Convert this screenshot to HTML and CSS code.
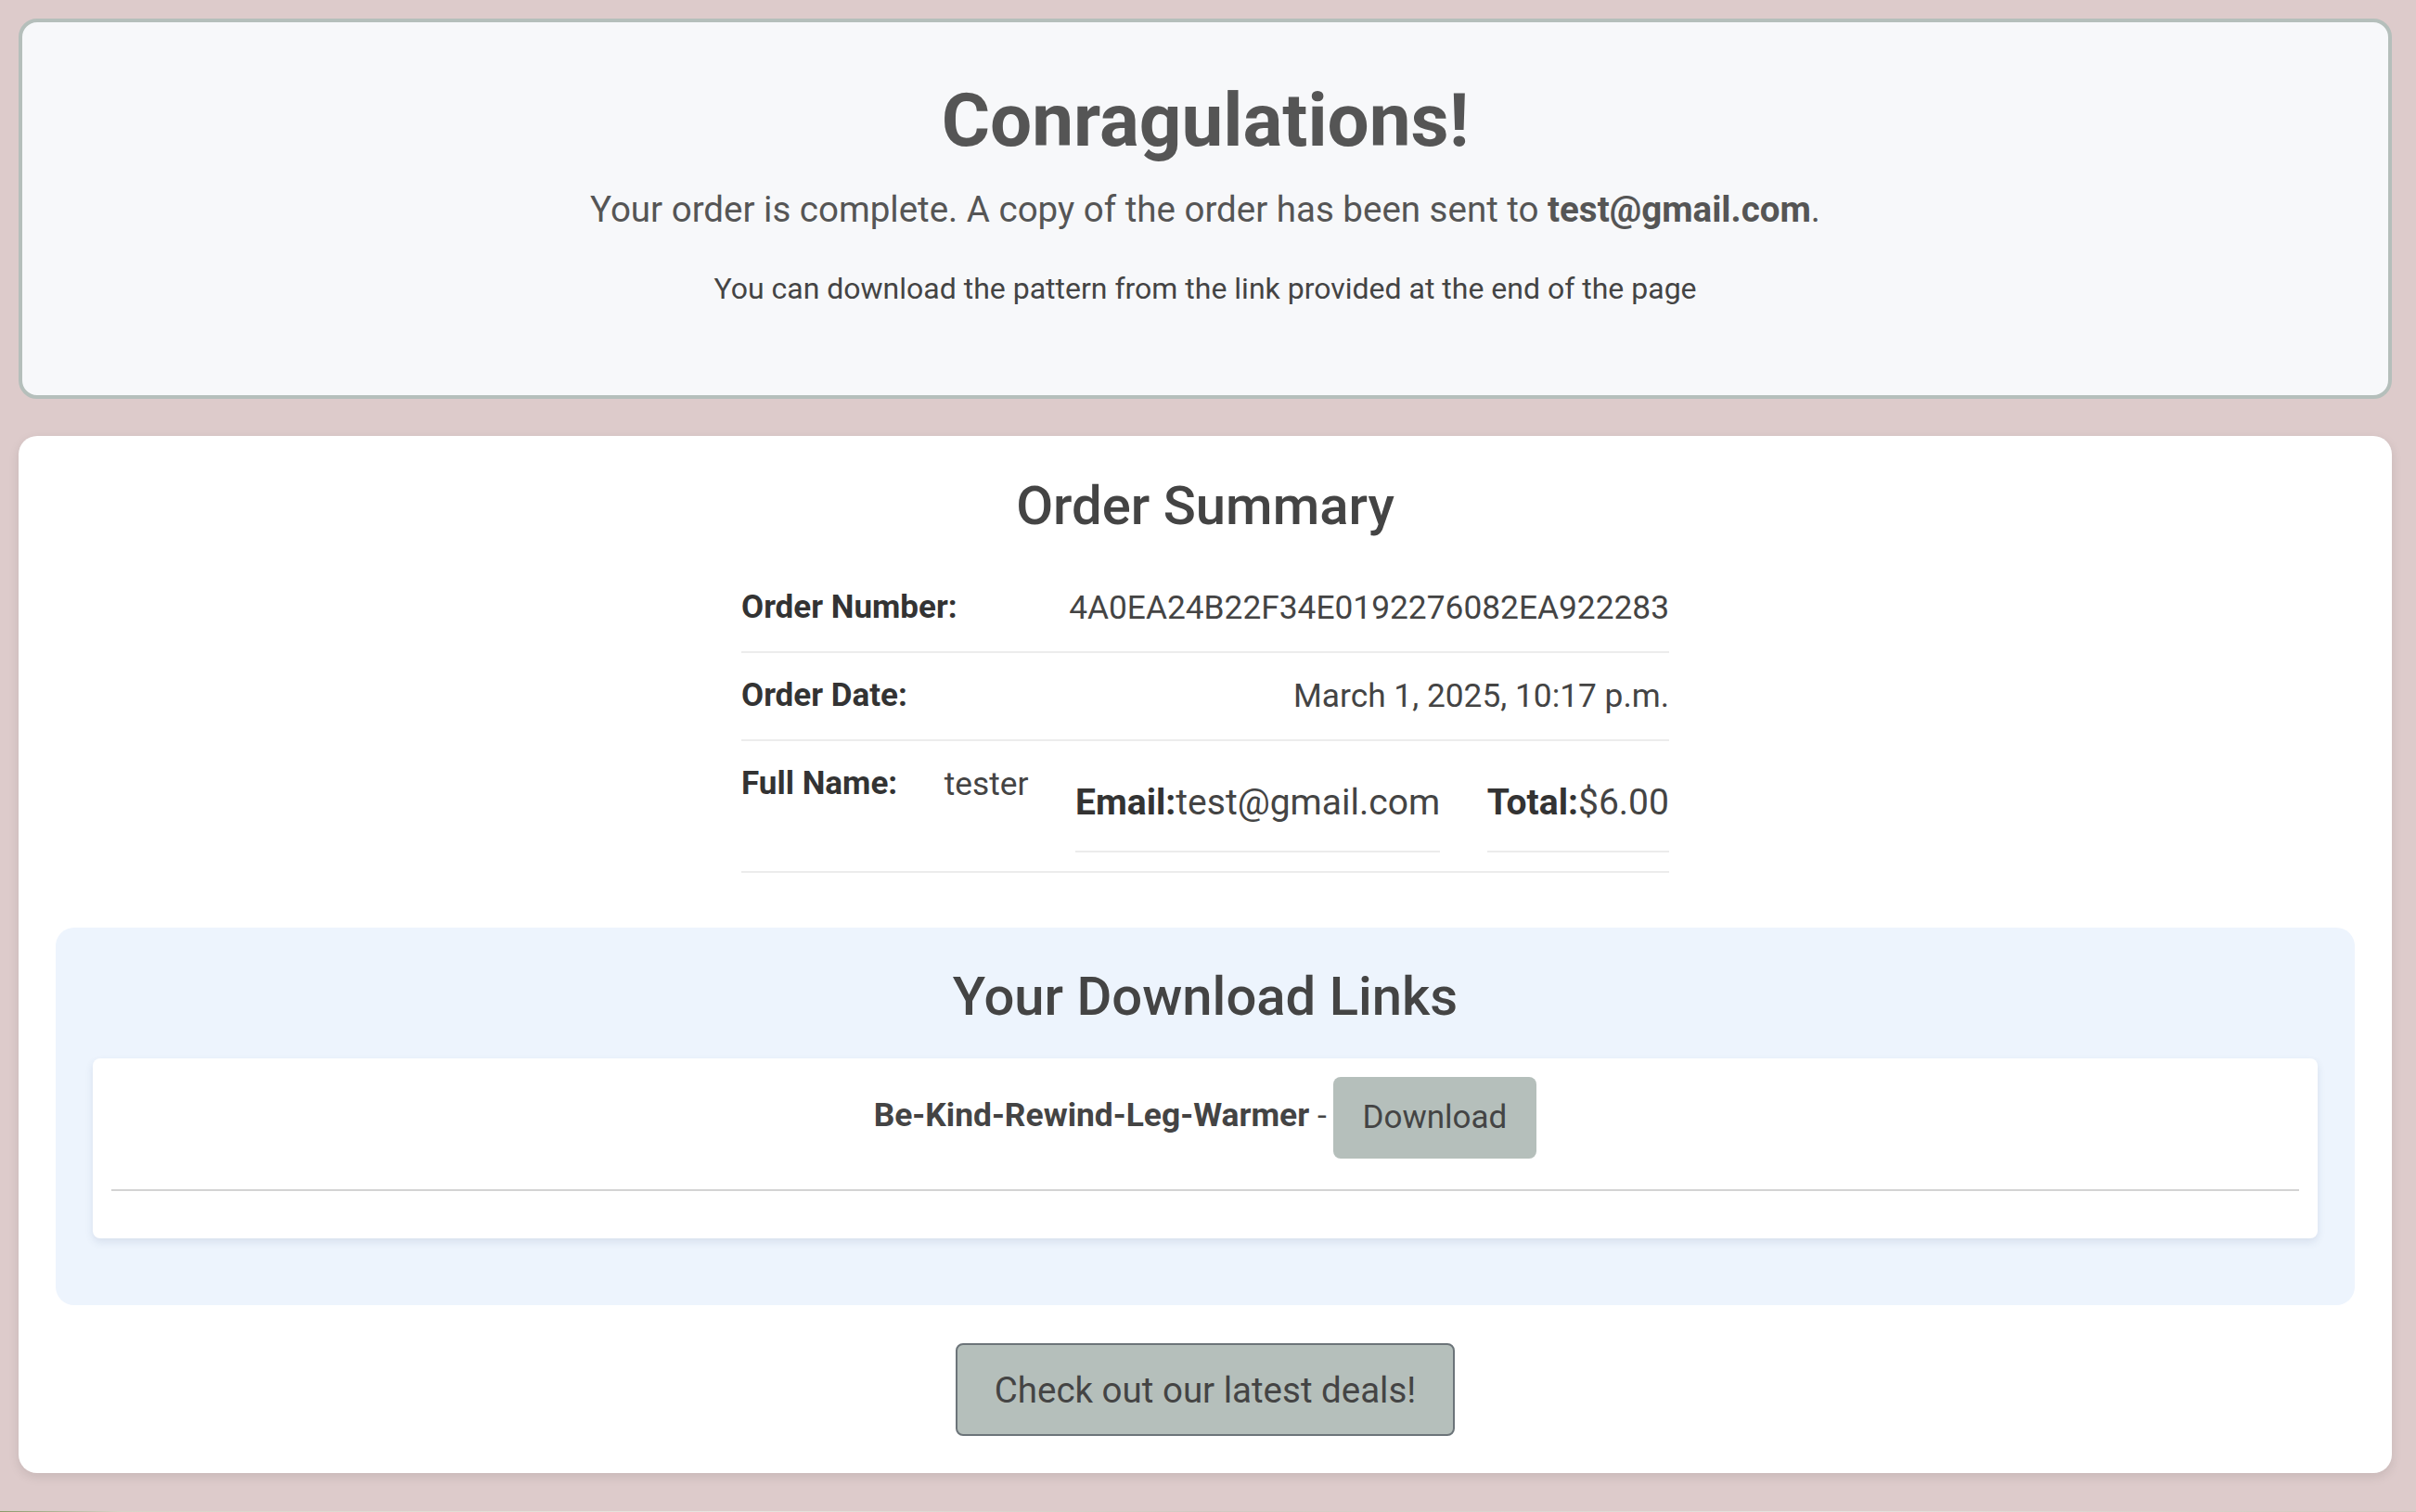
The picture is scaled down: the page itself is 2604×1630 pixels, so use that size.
FILE: index.html
```html
<!DOCTYPE html>
<html lang="en">
<head>
<meta charset="utf-8">
<title>Order Complete</title>
<link rel="stylesheet" href="styles.css">
</head>
<body>
<div class="page">
  <section class="congrats">
    <h1 class="congrats-title">Conragulations!</h1>
    <p class="congrats-lead">Your order is complete. A copy of the order has been sent to <strong>test@gmail.com</strong>.</p>
    <p class="congrats-note">You can download the pattern from the link provided at the end of the page</p>
  </section>

  <section class="summary-card">
    <h2 class="section-title">Order Summary</h2>
    <div class="summary-table">
      <div class="summary-row">
        <strong class="label">Order Number:</strong>
        <span class="value">4A0EA24B22F34E0192276082EA922283</span>
      </div>
      <div class="summary-row">
        <strong class="label">Order Date:</strong>
        <span class="value">March 1, 2025, 10:17 p.m.</span>
      </div>
      <div class="summary-row summary-row-last">
        <strong class="label">Full Name:</strong>
        <span class="value">tester</span>
        <span class="sub-cell"><strong>Email:</strong>test@gmail.com</span>
        <span class="sub-cell"><strong>Total:</strong>$6.00</span>
      </div>
    </div>

    <div class="downloads">
      <h2 class="section-title">Your Download Links</h2>
      <div class="download-card">
        <p class="download-line"><strong>Be-Kind-Rewind-Leg-Warmer</strong> - <a class="btn-download" href="#">Download</a></p>
        <hr class="download-rule">
      </div>
    </div>

    <div class="deals-wrap">
      <a class="btn-deals" href="#">Check out our latest deals!</a>
    </div>
  </section>
</div>
<div class="bottom-strip"></div>
</body>
</html>
```
FILE: styles.css
```css
html, body {
  margin: 0;
  padding: 0;
}

body {
  background: #ddcbcb;
  font-family: Roboto, "Liberation Sans", Arial, sans-serif;
  color: #444;
  overflow: hidden;
}

.page {
  padding: 20px 26px 41px 20px;
}

.congrats {
  box-sizing: border-box;
  height: 410px;
  border: 4px solid #b5bfbb;
  border-radius: 20px;
  background: #f7f8fa;
  text-align: center;
  padding-top: 56px;
  color: #555;
}

.congrats-title {
  margin: 0;
  font-size: 80px;
  line-height: 100px;
  font-weight: 700;
}

.congrats-lead {
  margin: 20px 0 0;
  font-size: 38.5px;
  line-height: 51px;
}

.congrats-lead strong {
  font-weight: 700;
}

.congrats-note {
  margin: 39px 0 0;
  font-size: 32px;
  line-height: 43px;
  color: #444;
}

.summary-card {
  margin-top: 40px;
  background: #fff;
  border-radius: 20px;
  padding: 40px;
  box-shadow: 0 4px 12px rgba(0, 0, 0, 0.1);
}

.section-title {
  margin: 0;
  text-align: center;
  font-size: 58px;
  line-height: 70px;
  font-weight: 500;
  color: #444;
}

.summary-table {
  width: 1000px;
  margin: 29px auto 0;
}

.summary-row {
  display: flex;
  justify-content: space-between;
  align-items: flex-start;
  padding: 20px 0 21px;
  border-bottom: 2px solid #ececec;
  font-size: 35px;
  line-height: 52px;
}

.summary-row-last {
  padding-bottom: 20px;
}

.label {
  font-weight: 700;
  color: #333;
}

.value {
  color: #444;
  font-size: 35.3px;
}

.sub-cell {
  font-size: 39px;
  line-height: 55px;
  padding: 19px 0 24px;
  border-bottom: 2px solid #ececec;
  color: #444;
}

.sub-cell strong {
  color: #333;
}

.downloads {
  margin-top: 59px;
  background: #edf4fd;
  border-radius: 20px;
  padding: 39px 40px 72px;
}

.download-card {
  margin-top: 32px;
  background: #fff;
  border-radius: 8px;
  padding: 20px 20px 20px;
  box-shadow: 0 4px 8px rgba(60, 80, 120, 0.12);
}

.download-line {
  margin: 0;
  text-align: center;
  font-size: 35.4px;
  line-height: 82px;
  height: 88px;
  color: #444;
}

.download-line strong {
  font-weight: 700;
}

.btn-download {
  display: inline-block;
  vertical-align: middle;
  background: #b5bfbb;
  color: #444;
  text-decoration: none;
  font-size: 35px;
  line-height: 52px;
  padding: 18px 32px;
  margin-left: -2px;
  border-radius: 8px;
}

.download-rule {
  margin: 33px 0 31px;
  border: 0;
  border-top: 2px solid #d3d3d3;
  height: 0;
}

.deals-wrap {
  margin-top: 41px;
  display: flex;
  justify-content: center;
}

.btn-deals {
  display: inline-block;
  background: #b5bfbb;
  border: 2px solid #6c7479;
  border-radius: 8px;
  color: #444;
  text-decoration: none;
  font-size: 38.5px;
  line-height: 57px;
  padding: 19.5px 40px;
}

.bottom-strip {
  height: 4px;
  background: linear-gradient(90deg, #8a9a6a 0%, #d8d4c8 5%, #e8e6e0 30%, #d0c8c0 50%, #e6e4e0 75%, #cfc6bc 100%);
}
```
